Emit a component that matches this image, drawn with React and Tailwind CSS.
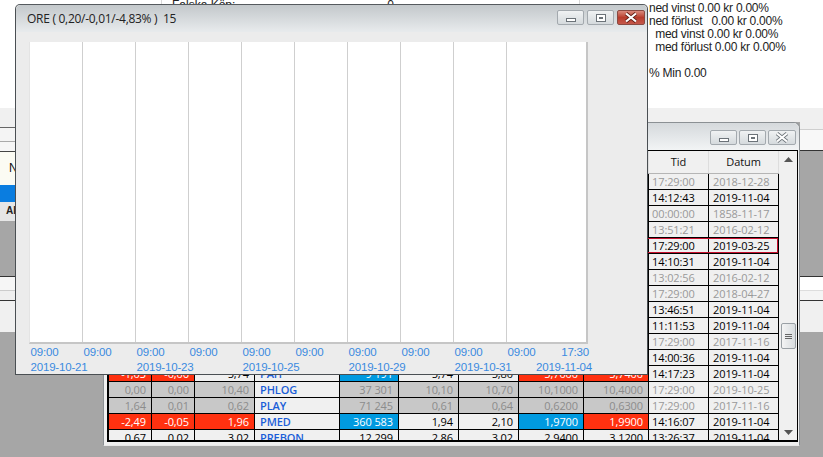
const rows = [
  { t: "17:29:00", d: "2018-12-28", old: true },
  { t: "14:12:43", d: "2019-11-04" },
  { t: "00:00:00", d: "1858-11-17", old: true },
  { t: "13:51:21", d: "2016-02-12", old: true },
  { t: "17:29:00", d: "2019-03-25", selected: true },
  { t: "14:10:31", d: "2019-11-04" },
  { t: "13:02:56", d: "2016-02-12", old: true },
  { t: "17:29:00", d: "2018-04-27", old: true },
  { t: "13:46:51", d: "2019-11-04" },
  { t: "11:11:53", d: "2019-11-04" },
  { t: "17:29:00", d: "2017-11-16", old: true },
  { t: "14:00:36", d: "2019-11-04" },
  {
    t: "14:17:23",
    d: "2019-11-04",
    name: "PAH",
    cells: [["-1,03", "r"], ["-0,06", "r"], ["5,74", ""], ["9 191", "b"], ["5,74", ""], ["5,80", ""], ["5,7000", "r"], ["5,7400", "r"]],
  },
  {
    t: "17:29:00",
    d: "2019-10-25",
    old: true,
    name: "PHLOG",
    cells: [["0,00", "g"], ["0,00", "g"], ["10,40", "g"], ["37 301", "g"], ["10,10", "g"], ["10,70", "g"], ["10,1000", "g"], ["10,4000", "g"]],
  },
  {
    t: "17:29:00",
    d: "2017-11-16",
    old: true,
    name: "PLAY",
    cells: [["1,64", "g"], ["0,01", "g"], ["0,62", "g"], ["71 245", "g"], ["0,61", "g"], ["0,64", "g"], ["0,6200", "g"], ["0,6300", "g"]],
  },
  {
    t: "14:16:07",
    d: "2019-11-04",
    name: "PMED",
    cells: [["-2,49", "r"], ["-0,05", "r"], ["1,96", "r"], ["360 583", "b"], ["1,94", ""], ["2,10", ""], ["1,9700", "b"], ["1,9900", "r"]],
  },
  {
    t: "13:26:37",
    d: "2019-11-04",
    name: "PREBON",
    cells: [["0,67", ""], ["0,02", ""], ["3,02", ""], ["12 299", ""], ["2,86", ""], ["3,02", ""], ["2,9400", ""], ["3,1200", ""]],
  },
];

const cellColors = {
  r: "bg-[#ff3110] text-white",
  b: "bg-[#009ae0] text-white",
  g: "bg-[#c8c8c8] text-[#8c8c8c]",
  "": "bg-[#f0f0f0] text-black",
};

const gridCols = "grid grid-cols-[43px_43px_60px_85px_59px_60px_60px_65px_65px_60px_70px]";
const cell = "border-r border-b border-black h-4 leading-[15px] whitespace-nowrap overflow-hidden";

const Row = ({ row }) => {
  const cells = row.cells || Array(8).fill(["", ""]);
  const first = cells.slice(0, 3);
  const rest = cells.slice(3);
  const timeColor = row.old ? "text-[#999999]" : "text-black";
  return (
    <div className={`${gridCols} relative`}>
      {first.map(([v, c], i) => (
        <div key={i} className={`${cell} text-right pr-[5px] ${cellColors[c]}`}>{v}</div>
      ))}
      <div className={`${cell} pl-[5px] bg-[#f0f0f0] text-[#1a5ed8] font-semibold`}>{row.name}</div>
      {rest.map(([v, c], i) => (
        <div key={i} className={`${cell} text-right pr-[5px] ${cellColors[c]}`}>{v}</div>
      ))}
      <div className={`${cell} pl-[3px] bg-[#f0f0f0] ${timeColor}`}>{row.t}</div>
      <div className={`${cell} pl-[4px] bg-[#f0f0f0] ${timeColor}`}>{row.d}</div>
      {row.selected && (
        <div className="absolute top-0 left-0 right-[1px] h-[15px] border border-[#c8102e]" />
      )}
    </div>
  );
};

const WinButton = ({ kind, active }) => {
  const close = kind === "close";
  const bg =
    close && active
      ? "bg-gradient-to-b from-[#d9897c] via-[#b83c2c] to-[#c5584a] border-[#8a4a42] w-[28px]"
      : "bg-gradient-to-b from-[#f0f2f3] to-[#d5dadd] border-[#a3a9ae] " + (close ? "w-[28px]" : "w-[27px]");
  return (
    <div className={`h-[15px] rounded-[2px] border flex items-center justify-center ${bg}`}>
      {kind === "min" && <div className="w-[10px] h-[4px] mt-[4px] bg-white border border-[#6b7278]" />}
      {kind === "max" && (
        <div className="w-[10px] h-[8px] bg-white border border-[#6b7278] flex items-center justify-center">
          <div className="w-[4px] h-[2px] border border-[#6b7278]" />
        </div>
      )}
      {close && (
        <svg width="14" height="11" viewBox="0 0 14 11">
          <path
            d="M2 1.5 L12 9.5 M12 1.5 L2 9.5"
            stroke={active ? "#5a1a12" : "#6b7278"}
            strokeWidth="3.6"
            fill="none"
          />
          <path d="M2 1.5 L12 9.5 M12 1.5 L2 9.5" stroke="#ffffff" strokeWidth="2.2" fill="none" />
        </svg>
      )}
    </div>
  );
};

const times = ["09:00", "09:00", "09:00", "09:00", "09:00", "09:00", "09:00", "09:00", "09:00", "09:00"];
const dates = ["2019-10-21", "2019-10-23", "2019-10-25", "2019-10-29", "2019-10-31"];

const ChartWindow = () => (
  <div className="absolute left-[15px] top-[4px] w-[633px] h-[371px] bg-[#ececec] border border-[#4a4f53] border-t-[#555a5e] rounded-t-[5px] flex flex-col">
    <div className="h-[27px] shrink-0 rounded-t-[5px] bg-gradient-to-b from-[#c3c8cb] to-[#e8ebed] flex items-center justify-between pl-[11px] pr-[2px]">
      <span className="text-[12px] text-[#222] whitespace-pre font-['Open_Sans',sans-serif] tracking-[-0.28px]">
        ORE ( 0,20/-0,01/-4,83% )  15
      </span>
      <div className="flex gap-[3px] -mt-[2px]">
        <WinButton kind="min" />
        <WinButton kind="max" />
        <WinButton kind="close" active />
      </div>
    </div>
    <div className="pl-[13px] pt-[10px]">
      <div className="flex w-[559px] h-[302px] bg-white border-r-2 border-b-2 border-[#c6c6c6] border-l border-l-[#e4e4e4]">
        {Array.from({ length: 9 }).map((_, i) => (
          <div key={i} className="w-[53px] h-full border-r border-[#cfcfcf]" />
        ))}
      </div>
      <div className="text-[#3a8ae0] text-[11.5px] leading-[15px] font-['Liberation_Sans',sans-serif] tracking-[-0.2px]">
        <div className="flex mt-[1px] -ml-[11px]">
          {times.map((t, i) => (
            <div key={i} className="w-[53px] shrink-0 text-center">{t}</div>
          ))}
          <div className="w-[41px] shrink-0 text-right">17:30</div>
        </div>
        <div className="flex -ml-[23px]">
          {dates.map((d, i) => (
            <div key={i} className="w-[106px] shrink-0 text-center">{d}</div>
          ))}
          <div className="w-[50px] shrink-0 whitespace-nowrap">2019-11-04</div>
        </div>
      </div>
    </div>
  </div>
);

const TableWindow = () => (
  <div className="absolute left-[103px] top-[122px] w-[697px] h-[324px] bg-[#f0f0f0] border border-[#8b9094] border-b-[#e8e8e8] rounded-t-[6px] flex flex-col">
    <div className="h-[27px] shrink-0 rounded-t-[6px] bg-gradient-to-b from-[#d5d9dc] to-[#f2f4f5] flex justify-end pr-[3px] pt-[7px]">
      <div className="flex gap-[2px]">
        <WinButton kind="min" />
        <WinButton kind="max" />
        <WinButton kind="close" />
      </div>
    </div>
    <div className="ml-[3px] w-[691px] h-[292px] border-l-2 border-t border-r border-b-2 border-black overflow-hidden flex font-['Open_Sans',sans-serif] text-[11px] tracking-[-0.1px]">
      <div className="w-[670px] shrink-0">
        <div className={`${gridCols} h-[23px] bg-[#f0f0f0] border-b border-[#b5b5b5] text-[#111]`}>
          <div className="col-span-9 border-r border-[#dddddd]" />
          <div className="border-r border-[#dddddd] text-center leading-[22px]">Tid</div>
          <div className="border-r border-[#dddddd] text-center leading-[22px]">Datum</div>
        </div>
        {rows.map((row, i) => (
          <Row key={i} row={row} />
        ))}
      </div>
      <div className="flex-1 bg-[#f0f0f0] flex flex-col items-center justify-between pt-[6px] pb-[5px]">
        <svg width="9" height="5" viewBox="0 0 9 5"><path d="M4.5 0 L9 5 H0 Z" fill="#555" /></svg>
        <div className="w-[15px] h-[26px] mt-[161px] rounded-[2px] border border-[#9aa0a5] bg-gradient-to-r from-[#f4f4f4] to-[#d8dcdf] flex flex-col items-center justify-center gap-[1px]">
          <div className="w-[7px] h-[1px] bg-[#666]" />
          <div className="w-[7px] h-[1px] bg-[#666]" />
          <div className="w-[7px] h-[1px] bg-[#666]" />
        </div>
        <svg className="mt-auto" width="9" height="5" viewBox="0 0 9 5"><path d="M0 0 H9 L4.5 5 Z" fill="#555" /></svg>
      </div>
    </div>
  </div>
);

const statLines = [
  "ned vinst 0.00 kr 0.00%",
  "ned förlust   0.00 kr 0.00%",
  "  med vinst 0.00 kr 0.00%",
  "  med förlust 0.00 kr 0.00%",
  " ",
  "% Min 0.00",
];

const App = () => (
  <div className="relative w-[823px] h-[457px] overflow-hidden bg-[#a6a6a6] font-['Liberation_Sans',sans-serif]">
    {/* Background window */}
    <div className="h-[108px] bg-white flex">
      <div className="w-[162px] border-r border-[#d8d8d8]" />
      <div className="w-[418px] border-r border-[#d8d8d8] flex justify-between pl-[10px] pr-[185px] -mt-[1px] text-[12px] leading-[13px] text-[#222]">
        <span>Falska Köp:</span>
        <span>0</span>
      </div>
      <div className="pl-[69px] pt-[2px] text-[12px] leading-[13px] text-[#222] tracking-[-0.25px] whitespace-pre">
        {statLines.map((l, i) => (
          <div key={i} className="h-[13px]">{l}</div>
        ))}
      </div>
    </div>
    <div className="h-[14px] bg-[#f0f0f0]" />
    <div className="flex justify-between">
      {/* Left strip */}
      <div className="w-[15px] text-[12px] overflow-hidden">
        <div className="h-[5px] bg-[#f0f0f0]" />
        <div className="h-[14px] bg-[#f4f4f4] border-t border-[#666]" />
        <div className="h-[10px] bg-[#f6f6f6] border-t border-[#aaaaaa]" />
        <div className="h-[34px] bg-[#fbfbf3] border-t border-[#444] pl-[9px] pt-[9px] leading-[14px] text-[#111]">N</div>
        <div className="h-[17px] bg-[#0a7de0]" />
        <div className="h-[19px] bg-[#e6e6e6] pl-[6px] pt-[2px] leading-[14px] font-bold text-[10px] text-[#222]">All</div>
        <div className="h-[55px]" />
        <div className="h-[14px] bg-[#f6f6f6] border-t border-[#333]" />
        <div className="h-[10px] bg-[#efefef] border-t border-[#cccccc]" />
        <div className="h-[32px] bg-[#f0f0f0] border-t border-[#333]" />
      </div>
      {/* Right strip */}
      <div className="w-[23px]">
        <div className="h-[7px] bg-[#f0f0f0]" />
        <div className="h-[21px] bg-[#f8f8f8] border-t border-[#cfcfcf]" />
        <div className="h-[126px] border-t border-[#333]" />
        <div className="h-[14px] bg-white border-t border-[#333]" />
        <div className="h-[10px] bg-[#f4f4f4] border-t border-[#dddddd]" />
        <div className="h-[32px] bg-[#f0f0f0] border-t border-[#333]" />
      </div>
    </div>

    <TableWindow />
    <ChartWindow />
  </div>
);

export default App;
